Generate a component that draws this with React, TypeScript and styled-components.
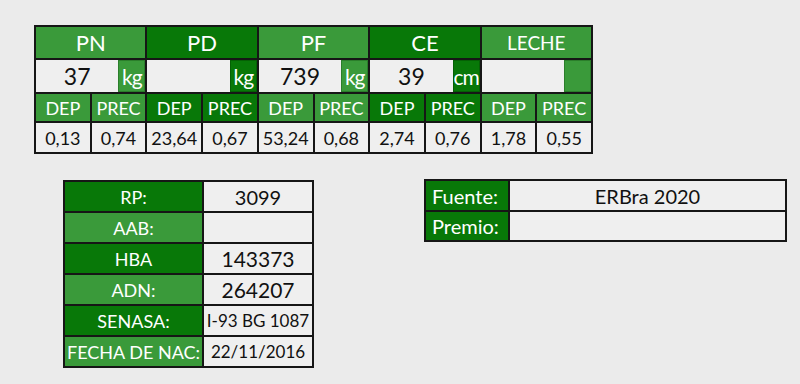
import React from 'react';
import styled, { createGlobalStyle } from 'styled-components';

const LIGHT = '#3a9a3a';
const DARK = '#087808';
const CELL = '#efefef';
const LINE = '#161616';

const groups = [
  { name: 'PN', value: '37', unit: 'kg', dep: '0,13', prec: '0,74' },
  { name: 'PD', value: '', unit: 'kg', dep: '23,64', prec: '0,67' },
  { name: 'PF', value: '739', unit: 'kg', dep: '53,24', prec: '0,68' },
  { name: 'CE', value: '39', unit: 'cm', dep: '2,74', prec: '0,76' },
  { name: 'LECHE', value: '', unit: '', dep: '1,78', prec: '0,55' },
];

const animal = [
  { label: 'RP:', value: '3099', size: 20 },
  { label: 'AAB:', value: '', size: 20 },
  { label: 'HBA', value: '143373', size: 21 },
  { label: 'ADN:', value: '264207', size: 21 },
  { label: 'SENASA:', value: 'I-93 BG 1087', size: 17 },
  { label: 'FECHA DE NAC:', value: '22/11/2016', size: 17 },
];

const GlobalStyle = createGlobalStyle`
  html, body {
    margin: 0;
    padding: 0;
    background: #ebebeb;
  }
  body {
    font-family: Lato, "Open Sans", sans-serif;
    width: 800px;
    height: 384px;
    overflow: hidden;
  }
`;

const Page = styled.div`
  padding: 25px 0 0 34px;
  display: flex;
  flex-direction: column;
  gap: 25px;
`;

const TopTable = styled.div`
  display: grid;
  width: 559px;
  box-sizing: border-box;
  grid-template-columns: repeat(10, 1fr);
  grid-template-rows: 31px 32px 27px 29px;
  gap: 2px;
  padding: 2px;
  background: ${LINE};
`;

const GreenCell = styled.div<{ $dark?: boolean; $size?: number }>`
  background: ${(p) => (p.$dark ? DARK : LIGHT)};
  color: #fff;
  font-size: ${(p) => p.$size ?? 18}px;
  display: flex;
  align-items: center;
  justify-content: center;
  white-space: nowrap;
  overflow: hidden;
`;

const HeaderCell = styled(GreenCell)`
  grid-column: span 2;
`;

const ValueRow = styled.div`
  grid-column: span 2;
  display: flex;
`;

const ValueCell = styled.div`
  flex: 1;
  background: ${CELL};
  color: #111;
  font-size: 23px;
  display: flex;
  align-items: center;
  justify-content: center;
`;

const UnitCell = styled.div<{ $dark?: boolean }>`
  width: 27px;
  box-sizing: border-box;
  border: 1px solid ${(p) => (p.$dark ? '#056005' : '#2b7e2b')};
  background: ${(p) => (p.$dark ? DARK : LIGHT)};
  color: #fff;
  font-size: 21px;
  display: flex;
  align-items: center;
  justify-content: center;
  letter-spacing: -1px;
  overflow: hidden;
`;

const DataCell = styled.div`
  background: ${CELL};
  color: #111;
  font-size: 18px;
  display: flex;
  align-items: center;
  justify-content: center;
  white-space: nowrap;
`;

const Bottom = styled.div`
  display: flex;
  align-items: flex-start;
  padding-left: 29px;
  gap: 110px;
`;

const AnimalTable = styled.div`
  display: grid;
  margin-top: 1px;
  grid-template-columns: 137px 108px;
  grid-auto-rows: 29px;
  gap: 2px;
  padding: 2px;
  background: ${LINE};
`;

const Label = styled(GreenCell)`
  font-size: 18px;
`;

const InfoValue = styled.div<{ $size: number }>`
  background: ${CELL};
  color: #111;
  font-size: ${(p) => p.$size}px;
  display: flex;
  align-items: center;
  justify-content: center;
  white-space: nowrap;
  overflow: hidden;
`;

const SourceTable = styled.div`
  display: grid;
  grid-template-columns: 82px 275px;
  grid-template-rows: 29px 28px;
  gap: 2px;
  padding: 2px;
  background: ${LINE};
`;

const SourceLabel = styled.div`
  background: ${DARK};
  color: #fff;
  font-size: 20px;
  display: flex;
  align-items: center;
  padding-left: 6px;
`;

const SourceValue = styled.div`
  background: ${CELL};
  color: #111;
  font-size: 20px;
  display: flex;
  align-items: center;
  justify-content: center;
`;

export default function App() {
  return (
    <>
      <GlobalStyle />
      <Page>
        <TopTable>
          {groups.map((g, i) => (
            <HeaderCell key={g.name} $dark={i % 2 === 1} $size={g.name === 'LECHE' ? 19 : 22}>
              {g.name}
            </HeaderCell>
          ))}
          {groups.map((g, i) => (
            <ValueRow key={g.name}>
              <ValueCell>{g.value}</ValueCell>
              <UnitCell $dark={i % 2 === 1}>{g.unit}</UnitCell>
            </ValueRow>
          ))}
          {groups.map((g, i) => (
            <React.Fragment key={g.name}>
              <GreenCell $dark={i % 2 === 1}>DEP</GreenCell>
              <GreenCell $dark={i % 2 === 1}>PREC</GreenCell>
            </React.Fragment>
          ))}
          {groups.map((g) => (
            <React.Fragment key={g.name}>
              <DataCell>{g.dep}</DataCell>
              <DataCell>{g.prec}</DataCell>
            </React.Fragment>
          ))}
        </TopTable>

        <Bottom>
          <AnimalTable>
            {animal.map((r, i) => (
              <React.Fragment key={r.label}>
                <Label $dark={i % 2 === 0}>{r.label}</Label>
                <InfoValue $size={r.size}>{r.value}</InfoValue>
              </React.Fragment>
            ))}
          </AnimalTable>

          <SourceTable>
            <SourceLabel>Fuente:</SourceLabel>
            <SourceValue>ERBra 2020</SourceValue>
            <SourceLabel>Premio:</SourceLabel>
            <SourceValue />
          </SourceTable>
        </Bottom>
      </Page>
    </>
  );
}
